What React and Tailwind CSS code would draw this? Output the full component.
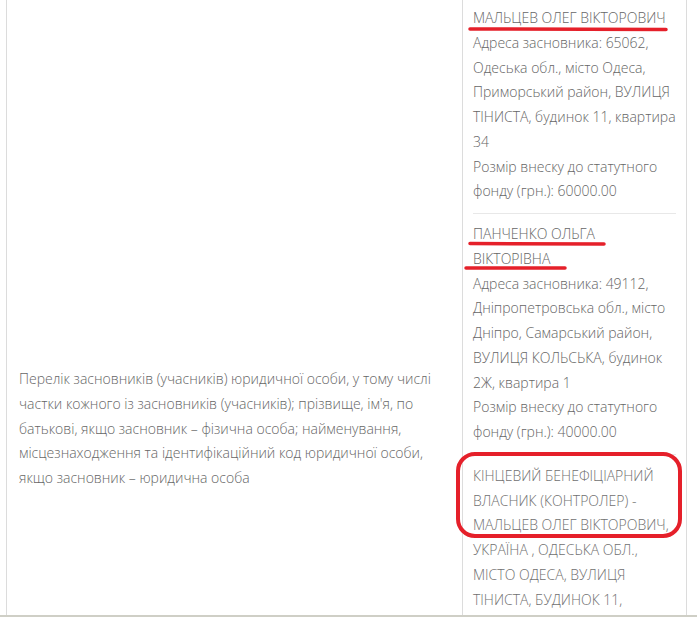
const FOUNDERS = [
  {
    name: ['МАЛЬЦЕВ ОЛЕГ ВІКТОРОВИЧ'],
    lines: [
      'Адреса засновника: 65062,',
      'Одеська обл., місто Одеса,',
      'Приморський район, ВУЛИЦЯ',
      'ТІНИСТА, будинок 11, квартира',
      '34',
      'Розмір внеску до статутного',
      'фонду (грн.): 60000.00',
    ],
  },
  {
    name: ['ПАНЧЕНКО ОЛЬГА', 'ВІКТОРІВНА'],
    lines: [
      'Адреса засновника: 49112,',
      'Дніпропетровська обл., місто',
      'Дніпро, Самарський район,',
      'ВУЛИЦЯ КОЛЬСЬКА, будинок',
      '2Ж, квартира 1',
      'Розмір внеску до статутного',
      'фонду (грн.): 40000.00',
    ],
  },
]

const OWNER = [
  'КІНЦЕВИЙ БЕНЕФІЦІАРНИЙ',
  'ВЛАСНИК (КОНТРОЛЕР) -',
  'МАЛЬЦЕВ ОЛЕГ ВІКТОРОВИЧ,',
  'УКРАЇНА , ОДЕСЬКА ОБЛ.,',
  'МІСТО ОДЕСА, ВУЛИЦЯ',
  'ТІНИСТА, БУДИНОК 11,',
]

const LABEL = [
  'Перелік засновників (учасників) юридичної особи, у тому числі',
  'частки кожного із засновників (учасників); прізвище, ім\'я, по',
  'батькові, якщо засновник – фізична особа; найменування,',
  'місцезнаходження та ідентифікаційний код юридичної особи,',
  'якщо засновник – юридична особа',
]

export default function App() {
  return (
    <div className="relative h-[619px] w-[697px] overflow-hidden bg-white">
      <div className="h-[617px] overflow-hidden border-b-2 border-[#cfcfc6]">
        <div className="ml-[6px] flex h-[858px] w-[682px] text-[14px] leading-[24.75px] text-[#666] font-['Open_Sans',sans-serif] font-light">
          {/* назва поля */}
          <div className="flex w-[457px] items-center border-x border-[#dcdcdc] pl-[12px]">
            <p>
              {LABEL.map((l, i) => (
                <span key={i} className="block whitespace-nowrap">{l}</span>
              ))}
            </p>
          </div>

          {/* засновники */}
          <div className="w-[224px] border-r border-[#dcdcdc] px-[10px]">
            {FOUNDERS.map((f, i) => (
              <div
                key={i}
                className={`border-b border-[#e8e8e8] pb-[9px] ${i === 0 ? 'pt-[6px]' : 'pt-[8px]'}`}
              >
                {[...f.name, ...f.lines].map((l, j) => (
                  <span key={j} className="block whitespace-nowrap">{l}</span>
                ))}
              </div>
            ))}
            <div className="pt-[9px] text-[#707070]">
              {OWNER.map((l, j) => (
                <span key={j} className="block whitespace-nowrap">{l}</span>
              ))}
            </div>
          </div>
        </div>
      </div>

      {/* червоні позначки */}
      <svg
        className="pointer-events-none absolute left-0 top-0"
        width="697"
        height="619"
        viewBox="0 0 697 619"
        fill="none"
        stroke="#e5202a"
        strokeLinecap="round"
      >
        <path d="M470 29 L666 29.5" strokeWidth="3.5" />
        <path d="M470 243.5 L604 244" strokeWidth="3.5" />
        <path d="M466 268 L565 268" strokeWidth="3.5" />
        <rect x="458" y="454" width="222" height="82" rx="17" strokeWidth="4" />
      </svg>
    </div>
  )
}
